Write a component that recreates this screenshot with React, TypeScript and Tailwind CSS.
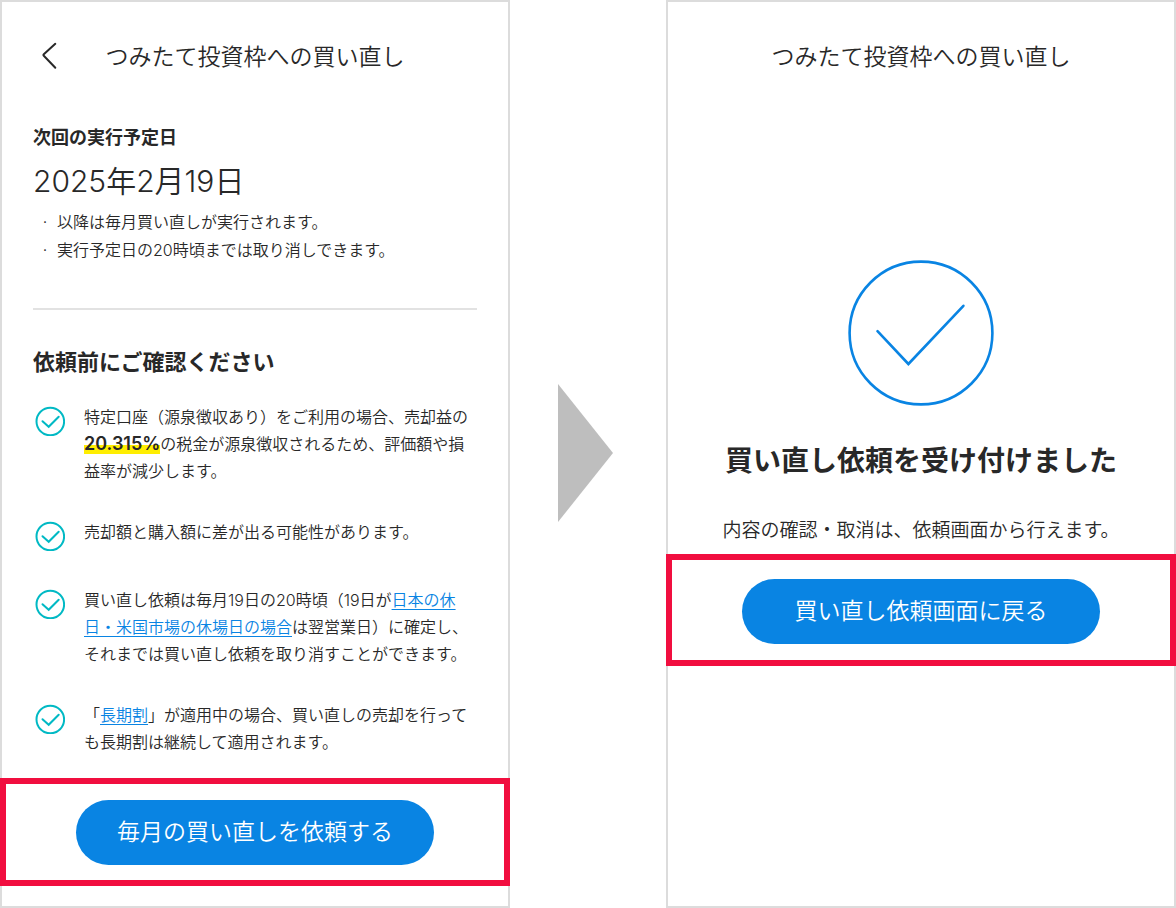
import React from 'react';

const TITULO = 'つみたて投資枠への買い直し';

const CheckIcon: React.FC = () => (
  <svg
    className="my-0.5 ml-0.5 h-[30px] w-[30px] shrink-0"
    viewBox="0 0 30 30"
    fill="none"
    stroke="#00b9c4"
    strokeWidth="2"
    strokeLinecap="round"
    aria-hidden="true"
  >
    <circle cx="15.3" cy="15.5" r="13.8" />
    <path d="M7.5 15.2 L13.7 20.8 L23.7 10.8" />
  </svg>
);

const CheckItem: React.FC<{ children: React.ReactNode }> = ({ children }) => (
  <li className="flex gap-[19px]">
    <CheckIcon />
    <p className="text-base leading-[27px] whitespace-nowrap">{children}</p>
  </li>
);

const TextLink: React.FC<{ children: React.ReactNode }> = ({ children }) => (
  <a href="#" className="text-[#0984e3] underline underline-offset-3">
    {children}
  </a>
);

const ActionBox: React.FC<{ label: string; className: string }> = ({ label, className }) => (
  <div className={`-mx-0.5 flex justify-center border-6 border-[#f10e3f] ${className}`}>
    <button
      type="button"
      className="h-[65px] w-[358px] rounded-full bg-[#0984e3] text-[23px] text-white"
    >
      {label}
    </button>
  </div>
);

const RequestScreen: React.FC = () => (
  <section className="flex-1 border-2 border-[#dcdcdc]">
    <header className="relative flex h-[73px] items-end justify-center">
      <button type="button" aria-label="戻る" className="absolute bottom-1 left-9">
        <svg
          className="h-8 w-6"
          viewBox="0 0 24 32"
          fill="none"
          stroke="#282828"
          strokeWidth="2"
          strokeLinecap="round"
          strokeLinejoin="round"
        >
          <path d="M17.3 4.8 L5.8 15.2 Q5 16 5.8 16.8 L17.3 28.8" />
        </svg>
      </button>
      <h1 className="text-[23px] leading-9">{TITULO}</h1>
    </header>

    <div className="px-[31px]">
      <h2 className="mt-[49px] text-lg leading-7 font-bold">次回の実行予定日</h2>
      <p className="mt-[9px] text-[30px] leading-10">2025年2月19日</p>
      <ul className="mt-[7px] text-base leading-7">
        <li className="flex">
          <span className="w-6 text-center">·</span>以降は毎月買い直しが実行されます。
        </li>
        <li className="flex">
          <span className="w-6 text-center">·</span>実行予定日の20時頃までは取り消しできます。
        </li>
      </ul>
      <hr className="mt-11 border-t-2 border-[#e2e2e2]" />

      <h2 className="mt-9 text-[22px] leading-8 font-bold">依頼前にご確認ください</h2>
      <ul className="mt-[26px] flex flex-col gap-[34px]">
        <CheckItem>
          特定口座（源泉徴収あり）をご利用の場合、売却益の
          <br />
          <strong className="bg-[linear-gradient(transparent_55%,#ffee00_55%)] text-lg leading-none font-semibold">
            20.315%
          </strong>
          の税金が源泉徴収されるため、評価額や損
          <br />
          益率が減少します。
        </CheckItem>
        <CheckItem>売却額と購入額に差が出る可能性があります。</CheckItem>
        <CheckItem>
          買い直し依頼は毎月19日の20時頃（19日が<TextLink>日本の休<br />日・米国市場の休場日の場合</TextLink>
          は翌営業日）に確定し、
          <br />
          それまでは買い直し依頼を取り消すことができます。
        </CheckItem>
        <CheckItem>
          「<TextLink>長期割</TextLink>」が適用中の場合、買い直しの売却を行って
          <br />
          も長期割は継続して適用されます。
        </CheckItem>
      </ul>
    </div>

    <ActionBox label="毎月の買い直しを依頼する" className="mt-[22px] pt-4 pb-[15px]" />
  </section>
);

const CompleteScreen: React.FC = () => (
  <section className="flex-1 border-2 border-[#dcdcdc]">
    <header className="flex h-[73px] items-end justify-center">
      <h1 className="text-[23px] leading-9">{TITULO}</h1>
    </header>

    <div className="mt-[185px] flex flex-col items-center">
      <svg
        className="h-[146px] w-[146px]"
        viewBox="0 0 146 146"
        fill="none"
        stroke="#0984e3"
        strokeWidth="2.6"
        aria-hidden="true"
      >
        <circle cx="73" cy="73" r="71.4" />
        <path d="M29.5 71.2 L60.4 104 L115.4 45.8" strokeLinecap="round" />
      </svg>
      <h2 className="mt-[35px] text-[28px] leading-10 font-bold">買い直し依頼を受け付けました</h2>
      <p className="mt-[35px] text-[19px] leading-[30px]">内容の確認・取消は、依頼画面から行えます。</p>
    </div>

    <ActionBox label="買い直し依頼画面に戻る" className="mt-2 pt-[19px] pb-4" />
  </section>
);

const App: React.FC = () => {
  return (
    <main className="flex min-h-screen bg-white font-['Inter','Noto_Sans_CJK_JP',sans-serif] font-[350] text-[#282828]">
      <RequestScreen />
      <div className="flex w-39 shrink-0 items-center pb-0.5 pl-12">
        <svg className="h-[138px] w-14" viewBox="0 0 56 138" aria-hidden="true">
          <path d="M0 0 L55 69 L0 138 Z" fill="#bebebe" />
        </svg>
      </div>
      <CompleteScreen />
    </main>
  );
};

export default App;
